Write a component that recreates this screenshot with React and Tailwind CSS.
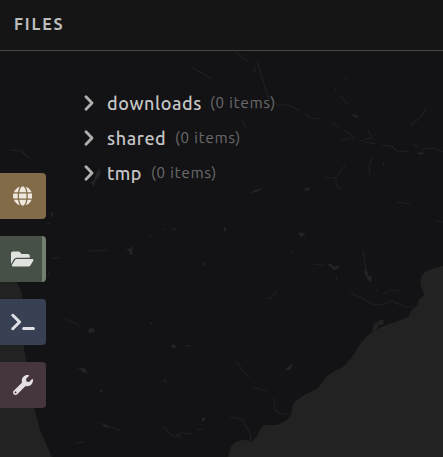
import { FaGlobe, FaFolderOpen, FaWrench } from "react-icons/fa";

const folders = [
  { name: "downloads", nameClass: "w-[103px] tracking-[0.6px]" },
  { name: "shared", nameClass: "w-[68px] tracking-[0.6px]" },
  { name: "tmp", nameClass: "w-[44px] tracking-[0.4px]" },
];

function PromptIcon({ className }) {
  return (
    <svg viewBox="0 0 24 18" className={className} fill="none" stroke="currentColor" strokeWidth="3" strokeLinecap="round" strokeLinejoin="round" aria-hidden="true">
      <path d="M1.8 2.3 L8.6 9 L1.8 15.7" />
      <path d="M12.6 15.5 H22.4" />
    </svg>
  );
}

function ChevronIcon({ className }) {
  return (
    <svg viewBox="0 0 10 16" className={className} fill="none" stroke="currentColor" strokeWidth="2.8" strokeLinecap="round" strokeLinejoin="round" aria-hidden="true">
      <path d="M2 1.8 L8 8 L2 14.2" />
    </svg>
  );
}

const tabs = [
  { Icon: FaGlobe, box: "bg-[#826b48]", icon: "text-[#eee8df] h-[20px] w-[19.5px]" },
  { Icon: FaFolderOpen, box: "bg-[#465047] border-r-4 border-[#71806f]", icon: "text-[#e0e2df] h-[20px] w-[22.5px]" },
  { Icon: PromptIcon, box: "bg-[#384054]", icon: "text-[#dfe1e6] h-[18px] w-[24px]" },
  { Icon: FaWrench, box: "bg-[#44353f]", icon: "text-[#e3dfe2] h-[20px] w-[20px]" },
];

const rivers = [
  "M257 60 L263 81 L268 97 L278 105 L289 105 L300 111",
  "M236 52 L244 59 L249 62 M254 66 L255 72",
  "M305 113 L311 118 L319 119 M331 123 L340 127 M344 130 L351 135 L355 140",
  "M340 96 L349 105 M335 87 L336 90 M345 79 L347 77",
  "M372 138 L368 130 M372 138 L359 141 M364 142 L376 144",
  "M382 145 L391 146 L398 152 L409 151 M413 144 L419 147 M422 149 L433 148 L443 152",
  "M426 107 L423 114 L412 125 L410 123",
  "M346 164 L336 178 L325 177 M336 178 L336 185 L341 189",
  "M372 158 L369 167 L370 174 M383 162 L384 166 M340 140 L350 138",
  "M397 202 L410 204 M191 67 L202 73 L212 79 M242 121 L246 128",
  "M10 150 L21 151 L29 158 M51 259 L61 257 M47 277 L50 272",
  "M88 251 L108 250 M149 237 L153 236 M162 230 L165 229",
  "M363 250 L365 265 L368 277 L372 282 M376 289 L378 292",
  "M350 293 L360 297 L374 305 L383 304 L392 301 L405 307 L417 307",
  "M384 294 L390 290 L399 291 M313 264 L323 265 M337 275 L336 281",
  "M267 299 L272 297 L277 291 M236 361 L243 371 L250 377",
  "M252 387 L268 391 M274 398 L275 409 L280 414 L292 414",
  "M230 417 L242 419 L250 433 L251 443 M65 319 L79 325",
  "M163 427 L174 437 L181 433 L192 434 M177 435 L181 438 M197 430 L203 429",
  "M77 368 L84 369 M100 423 L110 427 L120 430 M75 443 L85 442",
  "M292 251 L294 253 M435 221 L443 222",
];

const lakes = [
  "M250 193 L255 190 L262 188 L259 191 L251 193Z",
  "M304 189 L309 187 L310 190 L305 191Z",
  "M298 227 L299 232 L306 234 L301 237 L299 234Z",
  "M352 114 L356 115 L359 118 L354 117Z",
  "M417 152 L426 153 L420 155Z",
  "M126 248 L130 249 L134 245 L132 250 L133 254 L130 255 L129 251Z",
  "M90 183 L94 180 L96 174 L99 168 L101 173 L98 178 L95 182 L94 187 L92 184Z",
  "M326 263 L331 264 L335 267 L339 265 L339 268 L334 270Z",
  "M365 270 L368 272 L367 276 L372 276 L371 282 L368 280 L364 273Z",
  "M88 329 L94 328 L95 332 L89 333Z",
  "M80 369 L84 368 L88 373 L82 372Z",
  "M171 346 L174 344 L177 348 L173 348Z",
  "M202 419 L205 417 L205 420 L202 422Z",
  "M285 370 L290 365 L293 364 L290 370Z",
  "M51 213 L54 212 L51 218Z M47 223 L51 223 L48 225Z",
  "M150 322 L153 323 L151 325Z M187 345 L191 345 L188 347Z",
  "M163 378 L167 383 L164 382Z M100 389 L103 392 L100 392Z",
  "M224 226 L227 230 L224 232Z M203 262 L205 264 L203 266Z",
  "M172 230 L176 227 L175 230Z",
  "M102 425 L106 425 L110 429 L105 427Z",
];

function MapBackdrop() {
  return (
    <svg className="absolute inset-0" width="443" height="457" viewBox="0 0 443 457" aria-hidden="true">
      <g fill="none" stroke="#1f2022" strokeWidth="1.1" strokeLinejoin="round">
        {rivers.map((d) => <path key={d} d={d} />)}
      </g>
      <g fill="#232426">
        {lakes.map((d) => <path key={d} d={d} />)}
      </g>
      <g fill="#222222">
        <path d="M443 266 Q432 268 425 272 Q419 277 421 286 L424 294 Q424 297 419 299 L417 306 L411 311 Q409 317 406 318 L381 327 Q368 333 361 343 Q351 360 343 367 Q328 373 324 380 L318 388 Q303 395 296 401 Q291 406 292 412 Q292 419 277 425 L265 425 Q261 425 257 436 L251 443 L248 440 Q235 439 231 447 L228 457 H443 Z" />
        <path d="M0 281 H16 Q21 288 23 300 L24 348 L34 407 L40 430 L52 457 H0Z" />
        <path d="M372 332 L374 324 L380 320 L384 320 L383 325 L379 325 L376 330Z" />
      </g>
    </svg>
  );
}

export default function App() {
  return (
    <div className="relative h-[457px] w-[443px] overflow-hidden bg-[#131315] font-['Ubuntu','Noto_Sans',sans-serif]">
      <MapBackdrop />
      <div className="relative flex h-full flex-col">
        <header className="flex h-[51px] shrink-0 items-center border-b border-[#454545] bg-[#151515] pl-[14px]">
          <h1 className="relative -top-px text-[16px] leading-6 font-bold tracking-[1.85px] text-[#bdbdbd]">FILES</h1>
        </header>
        <div className="flex">
          <nav className="flex w-[46px] flex-col gap-[17px] pt-[122px]">
            {tabs.map(({ Icon, box, icon }, i) => (
              <button key={i} className={`flex h-[46px] w-[46px] items-center rounded-r-[4px] ${box}`}>
                <span className="flex w-[45px] shrink-0 justify-center"><Icon className={icon} /></span>
              </button>
            ))}
          </nav>
          <ul className="pt-[35px] pl-[38px]">
            {folders.map(({ name, nameClass }) => (
              <li key={name} className="flex h-[35px] items-center whitespace-nowrap">
                <ChevronIcon className="mr-[13px] mb-px h-[16px] w-[10px] text-[#b0b0b0]" />
                <span className={`text-[18px] font-medium text-[#c6c6c6] ${nameClass}`}>{name}</span>
                <span className="pb-px text-[15px] font-light tracking-[0.95px] text-[#6c6c6e] [-webkit-text-stroke:0.25px_#6c6c6e]">(0 items)</span>
              </li>
            ))}
          </ul>
        </div>
      </div>
    </div>
  );
}
